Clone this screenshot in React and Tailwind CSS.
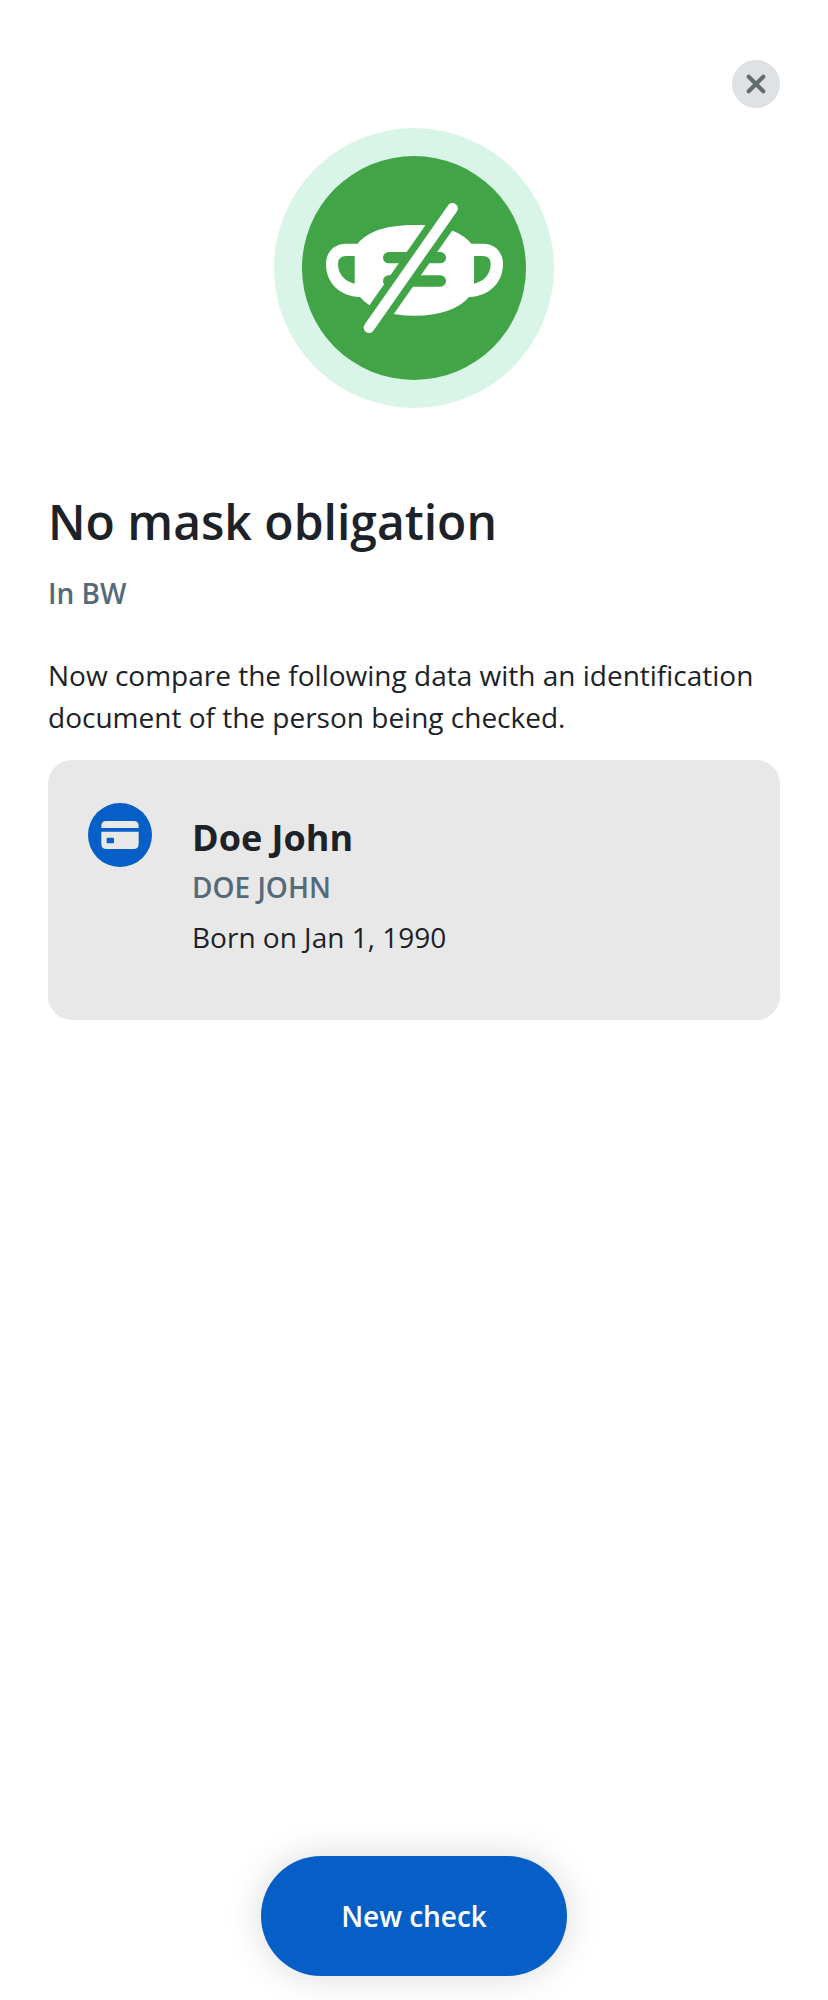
function NoMaskIcon() {
  return (
    <svg className="size-[280px]" viewBox="30 30 840 840" aria-hidden="true">
      <circle cx="450" cy="450" r="420" fill="#D9F5E8" />
      <circle cx="450" cy="450" r="336" fill="#41A447" />
      <path
        fill="#fff"
        d="M281 377C312 339 369 321 452 321C535 321 591 339 622 377H656C693 377 717 402 717 438C717 494 676 535 615 537C582 575 526 593 452 593C376 593 323 577 288 537C226 535 186 494 186 438C186 402 210 377 247 377Z"
      />
      <path fill="#41A447" d="M272 414H246C231 414 222 423 222 439C222 468 242 491 272 497Z" />
      <path fill="#41A447" d="M630 414H657C672 414 680 423 680 439C680 468 660 491 630 497Z" />
      <path d="M374 419H529M374 489H529" stroke="#41A447" strokeWidth="34" strokeLinecap="round" />
      <path d="M315 629L565.500 271" stroke="#41A447" strokeWidth="75" />
      <path d="M315 629L565.500 271" stroke="#fff" strokeWidth="32" strokeLinecap="round" />
    </svg>
  );
}

function CardIcon() {
  return (
    <svg className="size-16 shrink-0" viewBox="0 0 192 192" aria-hidden="true">
      <circle cx="96" cy="96" r="96" fill="#055FC6" />
      <path
        fill="#E8E8E8"
        fillRule="evenodd"
        d="M40 75V69Q40 54 55 54H137Q152 54 152 69V75ZM40 86H152V123Q152 138 137 138H55Q40 138 40 123ZM59 104Q56 104 56 107V118Q56 121 59 121H75Q78 121 78 118V107Q78 104 75 104Z"
      />
    </svg>
  );
}

export default function App() {
  return (
    <main className="flex h-[2000px] w-[828px] flex-col bg-white px-12 pt-[60px] pb-6 font-['Open_Sans',sans-serif] text-[28px] leading-[42px] text-[#1C2227]">
      <button
        aria-label="Close"
        className="flex size-12 items-center justify-center self-end rounded-full bg-[#DEE2E5]"
      >
        <svg className="size-6" viewBox="0 0 24 24" aria-hidden="true">
          <path d="M4.700 4.700L19.300 19.300M19.300 4.700L4.700 19.300" stroke="#636D6D" strokeWidth="4.200" strokeLinecap="round" />
        </svg>
      </button>
      <div className="mt-5 flex justify-center">
        <NoMaskIcon />
      </div>
      <h1 className="mt-[83px] text-[48px] leading-[61px] font-semibold">No mask obligation</h1>
      <p className="mt-5 font-semibold text-[#556A79]">In BW</p>
      <p className="mt-10">
        Now compare the following data with an identification document of the person being checked.
      </p>
      <section className="mt-[22px] flex h-[260px] shrink-0 gap-10 rounded-3xl bg-[#E8E8E8] px-10 pt-[43px]">
        <CardIcon />
        <div className="pt-[10px]">
          <h2 className="text-[36px] leading-[49px] font-bold">Doe John</h2>
          <p className="mt-1 font-semibold text-[#556A79]">DOE JOHN</p>
          <p className="mt-2">Born on Jan 1, 1990</p>
        </div>
      </section>
      <button className="mt-auto h-[120px] w-[306px] self-center rounded-full bg-[#055FC6] font-semibold tracking-[-0.03px] text-white shadow-[0_0_36px_rgba(0,0,0,0.15)]">
        New check
      </button>
    </main>
  );
}
